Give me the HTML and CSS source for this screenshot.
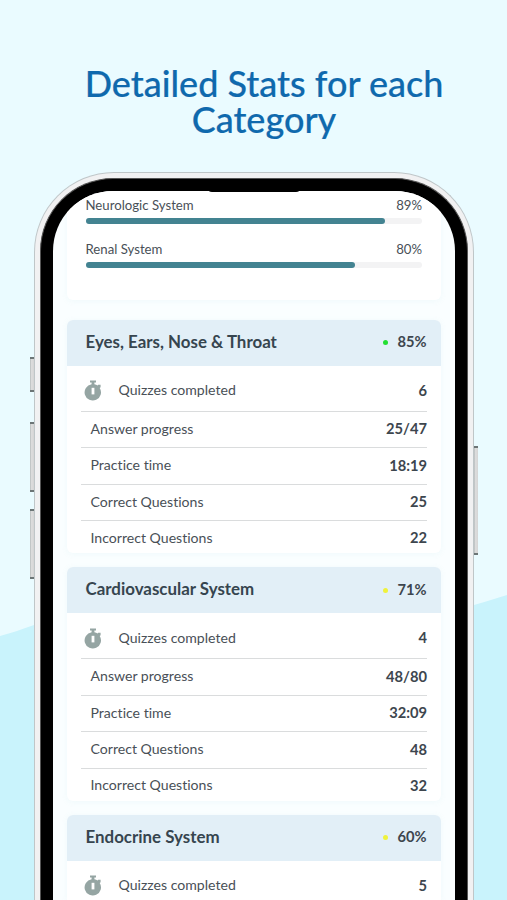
FILE: index.html
```html
<!DOCTYPE html>
<html lang="en">
<head>
    <meta charset="UTF-8">
    <title>Detailed Stats for each Category</title>
    <link rel="stylesheet" href="styles.css">
</head>
<body>
<svg class="wave" viewBox="0 0 507 310" aria-hidden="true">
    <path d="M0 46C12 43 22 39 34 35L474 15C486 12 496 8 507 5V310H0Z"/>
</svg>
<svg class="defs">
    <symbol id="timer" viewBox="0 0 18 21">
        <path d="M6 0.5h6v2h-1.6v1.7c1.2.2 2.3.7 3.2 1.4l.6-.9h2.4v2.6l-.9.6A8.2 8.2 0 1 1 7.6 4.2V2.5H6z"/>
        <path class="hand" d="M7.6 7.8h2.8v6.6H7.6z"/>
    </symbol>
</svg>
<h1 class="title">Detailed Stats for each<br>Category</h1>
<div class="phone">
    <i class="key key-mute"></i>
    <i class="key key-up"></i>
    <i class="key key-down"></i>
    <i class="key key-power"></i>
    <div class="bezel">
        <div class="screen">
            <div class="notch"></div>
            <div class="card summary">
                <div class="line"><span>Neurologic System</span><span>89%</span></div>
                <div class="bar"><div class="fill" style="width:89%"></div></div>
                <div class="line"><span>Renal System</span><span>80%</span></div>
                <div class="bar"><div class="fill" style="width:80%"></div></div>
            </div>
            <div class="card">
                <div class="head"><h2>Eyes, Ears, Nose &amp; Throat</h2><i class="dot green"></i><b>85%</b></div>
                <div class="rows">
                    <div class="row first"><svg class="icon"><use href="#timer"/></svg><span>Quizzes completed</span><b>6</b></div>
                    <div class="row"><span>Answer progress</span><b>25/47</b></div>
                    <div class="row"><span>Practice time</span><b>18:19</b></div>
                    <div class="row"><span>Correct Questions</span><b>25</b></div>
                    <div class="row"><span>Incorrect Questions</span><b>22</b></div>
                </div>
            </div>
            <div class="card">
                <div class="head"><h2>Cardiovascular System</h2><i class="dot yellow"></i><b>71%</b></div>
                <div class="rows">
                    <div class="row first"><svg class="icon"><use href="#timer"/></svg><span>Quizzes completed</span><b>4</b></div>
                    <div class="row"><span>Answer progress</span><b>48/80</b></div>
                    <div class="row"><span>Practice time</span><b>32:09</b></div>
                    <div class="row"><span>Correct Questions</span><b>48</b></div>
                    <div class="row"><span>Incorrect Questions</span><b>32</b></div>
                </div>
            </div>
            <div class="card cut">
                <div class="head"><h2>Endocrine System</h2><i class="dot yellow"></i><b>60%</b></div>
                <div class="rows">
                    <div class="row first"><svg class="icon"><use href="#timer"/></svg><span>Quizzes completed</span><b>5</b></div>
                </div>
            </div>
        </div>
    </div>
</div>
</body>
</html>
```
FILE: styles.css
```css
* {
    box-sizing: border-box;
}
body {
    margin: 0;
    height: 900px;
    overflow: hidden;
    position: relative;
    background-color: #eafbff;
    font-family: Lato, "Liberation Sans", sans-serif;
    font-variant-ligatures: none;
    color: #495057;
}
.wave {
    position: absolute;
    left: 0;
    top: 590px;
    width: 507px;
    height: 310px;
    fill: #c9f3fc;
}
.defs {
    display: none;
}
.title {
    margin: 0;
    padding: 65px 0 0 21px;
    height: 172px;
    text-align: center;
    font-size: 36px;
    line-height: 36px;
    font-weight: 500;
    color: #0f69ad;
    -webkit-text-stroke: .2px #0f69ad;
}
.phone {
    position: relative;
    width: 440px;
    height: 728px;
    margin-left: 34px;
    padding: 5px 5px 0;
    border: 1px solid #bfc6c8;
    border-bottom: 0;
    border-radius: 80px 80px 0 0;
    background-color: #f1f1f2;
}
.bezel {
    height: 100%;
    padding: 12px 12px 0;
    border: 1px solid #555;
    border-bottom: 0;
    border-radius: 73px 73px 0 0;
    background-color: #000;
}
.screen {
    position: relative;
    height: 100%;
    padding: 0 14px;
    overflow: hidden;
    border-radius: 60px 60px 0 0;
    background-color: #fafeff;
}
.notch {
    position: absolute;
    left: 153px;
    top: -6px;
    width: 96px;
    height: 7px;
    border-radius: 0 0 6px 6px;
    background-color: #000;
}
/* side buttons */
.key {
    position: absolute;
    left: -5px;
    width: 4px;
    border: solid #6c7576;
    border-width: 2px 0;
    background: linear-gradient(90deg, #b5bbbc, #dedede 40%, #d4d4d4);
}
.key-mute {
    top: 184px;
    height: 35px;
}
.key-up {
    top: 249px;
    height: 70px;
}
.key-down {
    top: 336px;
    height: 70px;
}
.key-power {
    left: auto;
    right: -5px;
    top: 273px;
    height: 109px;
}
.card {
    height: 233.5px;
    margin-bottom: 14px;
    border-radius: 6px;
    background-color: #fff;
    box-shadow: 0 1px 6px rgba(120, 190, 210, .08);
}
.summary {
    height: 109px;
    margin-bottom: 19.5px;
    padding: 4px 19px 0 18.5px;
    border-radius: 0 0 6px 6px;
}
.cut {
    height: 85px;
    margin-bottom: 0;
    border-radius: 6px 6px 0 0;
}
.line {
    display: flex;
    justify-content: space-between;
    height: 23px;
    font-size: 13.2px;
    line-height: 20px;
}
.bar {
    height: 6px;
    margin-bottom: 15px;
    border-radius: 3px;
    background-color: #f3f3f4;
}
.fill {
    height: 6px;
    border-radius: 3px;
    background-color: #438391;
}
.head {
    display: flex;
    align-items: center;
    height: 46px;
    padding: 0 14.5px 3px 18.5px;
    border-radius: 6px 6px 0 0;
    background-color: #e2eff7;
    color: #36454f;
}
.head h2 {
    flex: 1;
    margin: 0;
    font-size: 16.9px;
    font-weight: 700;
}
.head b,
.row b {
    font-size: 14.7px;
    font-weight: 700;
    color: #3d464e;
}
.dot {
    width: 5px;
    height: 5px;
    margin: 3px 9px 0 0;
    border-radius: 50%;
}
.green {
    background-color: #22df32;
}
.yellow {
    background-color: #eff23c;
}
.rows {
    padding: 0 14px;
}
.row {
    display: flex;
    align-items: center;
    height: 36.5px;
    padding-left: 9.5px;
    padding-bottom: 2px;
    border-bottom: 1px solid #dadcdd;
    font-size: 14.1px;
}
.row span {
    flex: 1;
}
.row:last-child {
    height: 32px;
    padding: 0 0 0 9.5px;
    border: 0;
}
.row.first {
    height: 46px;
    padding: 3px 0 0 2.5px;
    border-bottom: 1px solid #dadcdd;
}
.cut .row.first {
    border: 0;
    height: 45px;
}
.icon {
    width: 18px;
    height: 21px;
    margin: 2px 17px 0 0;
    fill: #95a5a3;
}
.hand {
    fill: #fff;
}
```
